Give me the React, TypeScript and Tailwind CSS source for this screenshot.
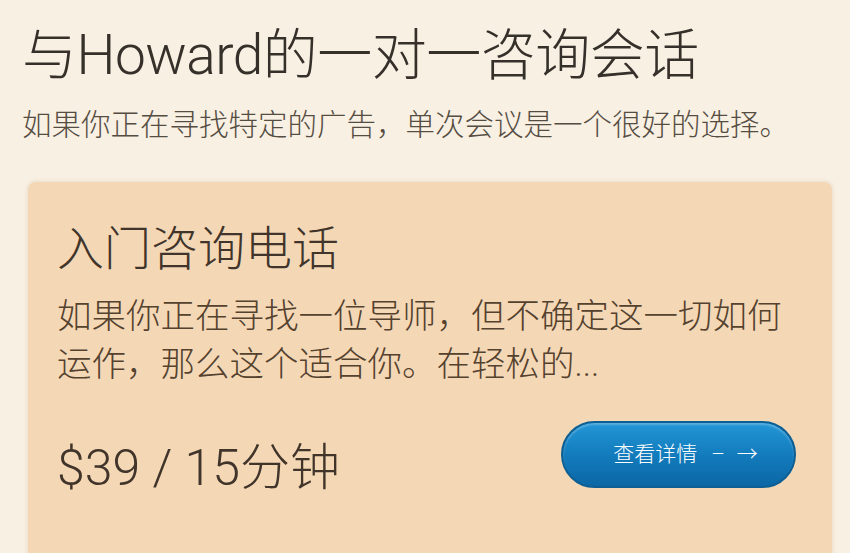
export default function App() {
  return (
    <div
      className="w-[850px] h-[553px] overflow-hidden bg-[#f8f0e3] pl-[22px] pr-[18px] pt-[21px] font-light"
      style={{ fontFamily: 'Roboto, "Noto Sans CJK SC", sans-serif' }}
    >
      <h1 className="text-[55px] leading-[68px] text-[#35302a] tracking-[-0.5px]">
        与Howard的一对一咨询会话
      </h1>
      <p className="mt-[16px] text-[29.5px] leading-[40px] text-[#554c42]">
        如果你正在寻找特定的广告，单次会议是一个很好的选择。
      </p>

      <div className="mt-[37px] ml-[6px] h-[400px] rounded-lg bg-[#f4d8b6] pl-[29px] pr-[36px] pt-[37px] shadow-[0_0_4px_rgba(180,140,90,0.25)]">
        <h2 className="text-[47px] leading-[60px] text-[#41342a]">入门咨询电话</h2>
        <p className="mt-[13px] text-[34.5px] leading-[48px] text-[#54412e]">
          如果你正在寻找一位导师，但不确定这一切如何运作，那么这个适合你。在轻松的...
        </p>

        <div className="mt-[33px] flex items-start justify-between">
          <div className="mt-[16px] text-[50px] leading-[62px] text-[#41342a]">
            $39 / 15分钟
          </div>
          <button className="flex h-[67px] w-[235px] items-center justify-center rounded-full border-2 border-[#0d5f93] bg-gradient-to-b from-[#2296d6] via-[#137cbd] to-[#0b67a5] pl-[14px] text-[21px] text-white shadow-[inset_0_2px_2px_rgba(255,255,255,0.25)]">
            <span>查看详情</span>
            <span className="ml-[14px]">–</span>
            <span className="ml-[12px]">→</span>
          </button>
        </div>
      </div>
    </div>
  );
}
